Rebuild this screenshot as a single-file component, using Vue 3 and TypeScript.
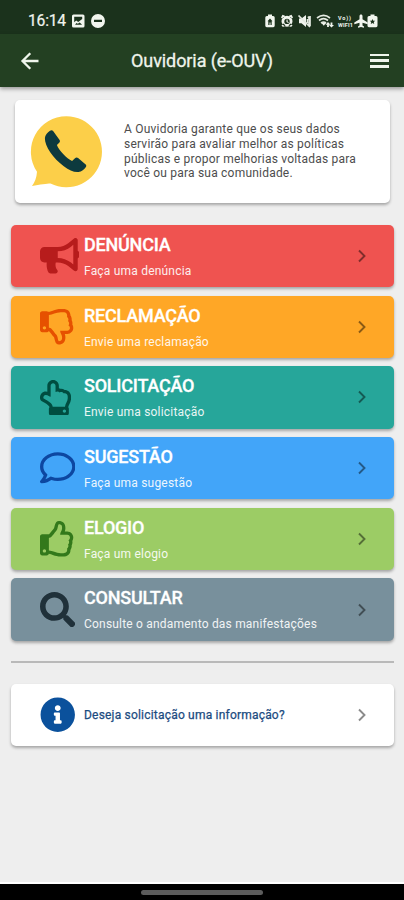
<script setup lang="ts">
interface MenuItem {
  key: string
  title: string
  subtitle: string
  width: number
  path: string
}

const items: MenuItem[] = [
  {
    key: 'denuncia',
    title: 'DENÚNCIA',
    subtitle: 'Faça uma denúncia',
    width: 576,
    path: 'M576 240c0-23.63-12.95-44.04-32-55.12V32.01C544 23.26 537.02 0 512 0c-7.12 0-14.19 2.38-19.98 7.02l-85.03 68.03C364.28 109.19 310.66 128 256 128H64c-35.35 0-64 28.65-64 64v96c0 35.35 28.65 64 64 64h33.7c-1.39 10.48-2.18 21.14-2.18 32 0 39.77 9.26 77.35 25.56 110.94 5.19 10.69 16.52 17.06 28.4 17.06h74.28c26.05 0 41.69-29.84 25.9-50.56-16.4-21.52-26.15-48.36-26.15-77.44 0-11.11 1.62-21.79 4.41-32H256c54.66 0 108.28 18.81 150.98 52.95l85.03 68.03a32.023 32.023 0 0 0 19.98 7.02c24.92 0 32-22.78 32-32V295.13C563.05 284.04 576 263.63 576 240zm-96 141.42l-33.05-26.44C392.95 311.78 325.12 288 256 288v-96c69.12 0 136.95-23.78 190.95-66.98L480 98.58v282.84z',
  },
  {
    key: 'reclamacao',
    title: 'RECLAMAÇÃO',
    subtitle: 'Envie uma reclamação',
    width: 512,
    path: 'M466.27 225.31c4.674-22.647.864-44.538-8.99-62.99 2.958-23.868-4.021-48.565-17.34-66.99C438.986 39.423 404.117 0 327 0c-7 0-15 .01-22.22.01C201.195.01 168.997 40 128 40h-10.845c-5.64-4.975-13.042-8-21.155-8H32C14.327 32 0 46.327 0 64v240c0 17.673 14.327 32 32 32h64c11.842 0 22.175-6.438 27.708-16h7.052c19.146 16.953 46.013 60.653 68.76 83.4 13.667 13.667 10.153 108.6 71.76 108.6 57.58 0 95.27-31.936 95.27-104.73 0-18.41-3.93-33.73-8.85-46.54h36.48c48.602 0 85.82-41.565 85.82-85.58 0-19.15-4.96-34.99-13.73-49.84zM64 296c-13.255 0-24-10.745-24-24s10.745-24 24-24 24 10.745 24 24-10.745 24-24 24zm330.18 16.73H290.19c0 37.82 28.36 55.37 28.36 94.54 0 23.75 0 56.73-47.28 56.73-18.91-18.91-9.46-66.18-37.82-94.54C206.9 342.89 167.28 272 138.92 272H128V85.83c53.611 0 100.001-37.82 171.64-37.82h37.82c35.512 0 60.82 17.12 53.12 65.9 15.2 8.16 26.5 36.44 13.94 57.57 21.581 20.384 18.699 51.065 5.21 65.62 9.45 0 22.36 18.91 22.27 37.81-.09 18.91-16.71 37.82-37.82 37.82z',
  },
  {
    key: 'solicitacao',
    title: 'SOLICITAÇÃO',
    subtitle: 'Envie uma solicitação',
    width: 448,
    path: 'M105.6 83.2v86.177a115.52 115.52 0 0 0-22.4-2.176c-47.914 0-83.2 35.072-83.2 92 0 45.314 48.537 57.002 78.784 75.707 12.413 7.735 23.317 16.994 33.253 25.851l.146.13.148.129C129.807 376.338 136 384.236 136 391.2v2.679c-4.952 5.747-8 13.536-8 22.12v64c0 17.673 12.894 32 28.8 32h230.4c15.906 0 28.8-14.327 28.8-32v-64c0-8.584-3.048-16.373-8-22.12V391.2c0-28.688 40-67.137 40-127.2v-21.299c0-62.542-38.658-98.8-91.145-99.94-17.813-12.482-40.785-18.491-62.791-15.985A93.148 93.148 0 0 0 272 118.847V83.2C272 37.765 234.416 0 188.8 0c-45.099 0-83.2 38.101-83.2 83.2zm118.4 0v91.026c14.669-12.837 42.825-14.415 61.05 4.95 19.646-11.227 45.624-1.687 53.625 12.925 39.128-6.524 61.325 10.076 61.325 50.6V264c0 45.491-35.913 77.21-39.676 120H183.571c-2.964-25.239-21.222-42.966-39.596-59.075-12.65-11.008-25.3-22.016-39.725-31.027C78.394 277.758 48 267.8 48 259.2c0-23.375 8.8-44 35.2-44 35.2 0 53.475 26.4 70.4 26.4V83.2c0-18.4 16.975-35.2 35.2-35.2 18.225 0 35.2 16.794 35.2 35.2zM352 424c13.255 0 24 10.745 24 24s-10.745 24-24 24-24-10.745-24-24 10.745-24 24-24z',
  },
  {
    key: 'sugestao',
    title: 'SUGESTÃO',
    subtitle: 'Faça uma sugestão',
    width: 512,
    path: 'M256 32C114.6 32 0 125.1 0 240c0 47.6 19.9 91.2 52.9 126.3C38 405.7 7 439.1 6.5 439.5c-6.6 7-8.4 17.2-4.6 26S14.4 480 24 480c61.5 0 110-25.7 139.1-46.3C192 442.8 223.2 448 256 448c141.4 0 256-93.1 256-208S397.4 32 256 32zm0 368c-26.7 0-53.1-4.1-78.4-12.1l-22.7-7.2-19.5 13.8c-14.3 10.1-33.9 21.4-57.5 29 7.3-12.1 14.4-25.7 19.9-40.2l10.6-28.1-20.6-21.8C69.7 314.1 48 282.2 48 240c0-88.2 93.3-160 208-160s208 71.8 208 160-93.3 160-208 160z',
  },
  {
    key: 'elogio',
    title: 'ELOGIO',
    subtitle: 'Faça um elogio',
    width: 512,
    path: 'M466.27 286.69C475.04 271.84 480 256 480 236.85c0-44.015-37.218-85.58-85.82-85.58H357.7c4.92-12.81 8.85-28.13 8.85-46.54C366.55 31.936 328.86 0 271.28 0c-61.607 0-58.093 94.933-71.76 108.6-22.747 22.747-49.615 66.447-68.76 83.4H32c-17.673 0-32 14.327-32 32v240c0 17.673 14.327 32 32 32h64c14.893 0 27.408-10.174 30.978-23.95 44.509 1.001 75.06 39.94 177.802 39.94 7.22 0 15.22.01 22.22.01 77.117 0 111.986-39.423 112.94-95.33 13.319-18.425 20.299-43.122 17.34-66.99 9.854-18.452 13.664-40.343 8.99-62.99zm-61.75 53.83c12.56 21.13 1.26 49.41-13.94 57.57 7.7 48.78-17.608 65.9-53.12 65.9h-37.82c-71.639 0-118.029-37.82-171.64-37.82V240h10.92c28.36 0 67.98-70.89 94.54-97.46 28.36-28.36 18.91-75.63 37.82-94.54 47.28 0 47.28 32.98 47.28 56.73 0 39.17-28.36 56.72-28.36 94.54h103.99c21.11 0 37.73 18.91 37.82 37.82.09 18.9-12.82 37.81-22.27 37.81 13.489 14.555 16.371 45.236-5.21 65.62zM88 432c0 13.255-10.745 24-24 24s-24-10.745-24-24 10.745-24 24-24 24 10.745 24 24z',
  },
  {
    key: 'consultar',
    title: 'CONSULTAR',
    subtitle: 'Consulte o andamento das manifestações',
    width: 512,
    path: 'M505 442.7L405.3 343c-4.5-4.5-10.6-7-17-7H372c27.6-35.3 44-79.7 44-128C416 93.1 322.9 0 208 0S0 93.1 0 208s93.1 208 208 208c48.3 0 92.7-16.4 128-44v16.3c0 6.4 2.5 12.5 7 17l99.7 99.7c9.4 9.4 24.6 9.4 33.9 0l28.3-28.3c9.4-9.4 9.4-24.6.1-34zM208 336c-70.7 0-128-57.2-128-128 0-70.7 57.2-128 128-128 70.7 0 128 57.2 128 128 0 70.7-57.2 128-128 128z',
  },
]
</script>

<template>
  <div class="screen">
    <div class="status">
      <span class="time">16:14</span>
      <svg class="status-left" width="34" height="16" viewBox="0 0 34 16">
        <path fill-rule="evenodd" d="M2.500 1.500h9.500A1.500 1.500 0 0 1 13.500 3v10a1.500 1.500 0 0 1-1.500 1.500H2.500A1.500 1.500 0 0 1 1 13V3a1.500 1.500 0 0 1 1.500-1.500zm.7 2.300v5.400l2-1.600 2 1.500 4-3.200V3.800zm.9 8h7l-2.400-2.300-1.800 1.200-1.500-.8z" />
        <path fill-rule="evenodd" d="M27 1a7 7 0 1 1 0 14 7 7 0 0 1 0-14zm-4 5.800v2.300h8V6.800z" />
      </svg>
      <svg class="status-right" width="116" height="16" viewBox="0 0 116 16">
        <path fill-rule="evenodd" d="M4 1.500h4V3h1.200a1.500 1.500 0 0 1 1.500 1.500v8.300a1.400 1.400 0 0 1-1.400 1.400H2.700a1.400 1.400 0 0 1-1.400-1.400V4.500A1.500 1.500 0 0 1 2.800 3H4zm2 4-2.500 2.800h.8V12h1.200V9.500h1V12h1.200V8.300h.8z" />
        <path fill-rule="evenodd" d="M18.500 1.800l2.500 1-2.500 3L17 4.500zM27.500 1.800l-2.500 1 2.500 3L29 4.500zM23 2.700a5.500 5.500 0 1 1 0 11 5.500 5.500 0 0 1 0-11zm0 3a2.700 2.700 0 1 0 0 5.400 2.700 2.700 0 0 0 0-5.400zM17.500 12.500l2-2 2 2-2.500 1.500zm11 0-2-2-2 2 2.500 1.500z" />
        <path d="M22.500 6.500h1.100v2l1.200.7-.5.9-1.800-1z" />
        <path d="M35 5.500h2.500L42 2v12l-4.500-3.800H35z" />
        <path class="line" d="M34.500 2.500 46 14M44 3.500c2 2.400 2 6.500 0 9M43.500 6v4M46 3v10" />
        <path class="line" d="M53 5c4.200-3.200 9-3.200 13 0M55 7.500c2.800-2.200 6.200-2.200 9 0M57 10c1.600-1.100 3.500-1.100 5 0" />
        <path d="m57.500 10 2.300 2.800L62 10zM64 9l2.500 2.800h-1.600V14h-1.800v-2.200h-1.600zM67.500 14.500 65 12h1.600V9.500h1.800V12H70z" />
        <text x="74" y="7.200" class="volte" textLength="13">Vo))</text>
        <text x="74" y="13.700" class="volte" textLength="15">WIFI1</text>
        <path d="M97 1.500c.9 0 1.500.7 1.500 1.500v3.300l5.200 3.200v1.800l-5.200-1.500v2.600l1.500 1.200v1.100l-3-.8-3 .8v-1.100l1.500-1.200V9.800l-5.200 1.500V9.500l5.200-3.200V3c0-.8.600-1.500 1.500-1.500z" />
        <path fill-rule="evenodd" d="M106.500 1.500h4V3h1.500a1.500 1.500 0 0 1 1.500 1.500v8.300a1.400 1.400 0 0 1-1.400 1.400h-7.200a1.400 1.400 0 0 1-1.400-1.400V4.500a1.500 1.500 0 0 1 1.500-1.500h1.500zm2 4.500-.8 1.700h-2l1.500 1.400-.4 2 1.700-1 1.700 1-.4-2 1.500-1.400h-2z" />
      </svg>
    </div>

    <header class="appbar">
      <svg class="back" width="24" height="24" viewBox="0 0 24 24"><path d="M20.500 12H5M12.300 4.200 4.500 12l7.800 7.800" /></svg>
      <h1>Ouvidoria (e-OUV)</h1>
      <div class="burger"><i /><i /><i /></div>
    </header>

    <main>
      <section class="card intro">
        <svg width="72" height="74" viewBox="0 0 72 74">
          <path fill="#fccf49" d="M36.500 1.300a35.500 35.500 0 1 1-16 67.200c-3.500.2-10.500 1-18.500 2.500 2.800-3.800 4.600-8.300 5-14.300A35.500 35.500 0 0 1 36.500 1.300z" />
          <path fill="#0d3a3e" d="M20 15.700c-2.600 1.700-5 4.300-5.100 7.400-.3 8.200 8.300 20.500 18.900 28.100 5.300 3.800 9.800 6.200 14.600 5.800 3.300-.3 5.900-2.500 7.500-5 .7-1.100.4-2-.5-2.800l-7.300-6.100c-1-.9-2.200-.8-3.100.1l-2.900 2.900c-5.500-2.700-13.100-10.600-15.200-16.100l2.300-2.300c1-1 1-1.900.2-3l-6.300-8.700c-.8-1.100-2-1-3.100-.3z" />
        </svg>
        <p>A Ouvidoria garante que os seus dados<br>servirão para avaliar melhor as políticas<br>públicas e propor melhorias voltadas para<br>você ou para sua comunidade.</p>
      </section>

      <nav>
        <a v-for="item in items" :key="item.key" class="card row" :class="item.key">
          <span class="icon">
            <svg :viewBox="`0 0 ${item.width} 512`"><path :d="item.path" /></svg>
          </span>
          <span class="copy">
            <strong>{{ item.title }}</strong>
            <small>{{ item.subtitle }}</small>
          </span>
          <svg class="chevron" width="10" height="14" viewBox="0 0 10 14"><path d="m2 1.500 5.500 5.500L2 12.500" /></svg>
        </a>
      </nav>

      <hr>

      <a class="card row info">
        <span class="icon">
          <svg viewBox="0 0 512 512"><path d="M256 8C119.043 8 8 119.083 8 256c0 136.997 111.043 248 248 248s248-111.003 248-248C504 119.083 392.957 8 256 8zm0 110c23.196 0 42 18.804 42 42s-18.804 42-42 42-42-18.804-42-42 18.804-42 42-42zm56 254c0 6.627-5.373 12-12 12h-88c-6.627 0-12-5.373-12-12v-24c0-6.627 5.373-12 12-12h12v-64h-12c-6.627 0-12-5.373-12-12v-24c0-6.627 5.373-12 12-12h64c6.627 0 12 5.373 12 12v100h12c6.627 0 12 5.373 12 12v24z" /></svg>
        </span>
        <span class="question">Deseja solicitação uma informação?</span>
        <svg class="chevron" width="10" height="14" viewBox="0 0 10 14"><path d="m2 1.500 5.500 5.500L2 12.500" /></svg>
      </a>
    </main>

    <footer><i /></footer>
  </div>
</template>

<style>
body {
  background: #eee;
}
</style>

<style scoped>
.screen {
  display: flex;
  flex-direction: column;
  width: 404px;
  height: 900px;
  overflow: hidden;
  background: #eee;
  font-family: Roboto, "Liberation Sans", sans-serif;
}
.status {
  display: flex;
  align-items: center;
  box-sizing: border-box;
  height: 34px;
  padding: 8px 24px 0 28px;
  background: #1b321c;
  color: #f1f5ee;
  fill: #f1f5ee;
}
.time {
  width: 42.500px;
  font-size: 15.700px;
  letter-spacing: -.25px;
  line-height: 20px;
  -webkit-text-stroke: .2px #f1f5ee;
}
.status-right {
  margin-left: auto;
}
.line {
  fill: none;
  stroke: #e4eae1;
  stroke-width: 1.700;
}
.volte {
  font-size: 5.500px;
  font-weight: 700;
}
.appbar {
  display: flex;
  align-items: center;
  box-sizing: border-box;
  height: 52.500px;
  flex: none;
  padding: 1px 15px 0 18px;
  background: #234022;
  box-shadow: 0 2px 4px rgba(0, 0, 0, .35);
  z-index: 1;
}
.back {
  fill: none;
  stroke: #eff5ec;
  stroke-width: 2.300;
}
h1 {
  margin: 0 auto 0 89px;
  color: #eff5ec;
  font-size: 18px;
  font-weight: 400;
  letter-spacing: -.08px;
  line-height: 24px;
  -webkit-text-stroke: .3px #eff5ec;
}
.burger {
  display: flex;
  flex-direction: column;
  gap: 3px;
  width: 19px;
}
.burger i {
  height: 2.800px;
  background: #eff5ec;
}
main {
  flex: 1;
  padding: 13.500px 10px 0 11px;
}
.card {
  border-radius: 5px;
  box-shadow: 0 2px 3px rgba(0, 0, 0, .3);
}
.intro {
  display: flex;
  align-items: center;
  gap: 22px;
  box-sizing: border-box;
  height: 103px;
  margin: 0 4px;
  padding: 0 15px;
  background: #fff;
}
.intro p {
  margin: 0;
  color: #4d4d4d;
  font-size: 12px;
  letter-spacing: .21px;
  line-height: 14.700px;
  white-space: nowrap;
}
nav {
  display: grid;
  gap: 8.500px;
  margin-top: 22px;
}
.row {
  display: flex;
  align-items: center;
  box-sizing: border-box;
  height: 62.200px;
  padding: 0 27.500px 0 28.500px;
}
.icon {
  width: 44.500px;
  height: 35.500px;
}
.icon svg {
  display: block;
  height: 35.500px;
}
.copy {
  display: flex;
  flex-direction: column;
  gap: 5px;
  padding-top: .5px;
  color: #fff;
}
.copy strong {
  font-size: 18px;
  font-weight: 500;
  letter-spacing: -.22px;
  line-height: 24px;
  -webkit-text-stroke: .3px #fff;
}
.copy small {
  font-size: 12px;
  letter-spacing: .2px;
  line-height: 18px;
  opacity: .9;
}
.chevron {
  margin-left: auto;
  fill: none;
  stroke: rgba(0, 0, 0, .46);
  stroke-width: 1.900;
}
.denuncia {
  background: #ef5350;
  fill: #b71c1c;
}
.reclamacao {
  background: #ffa726;
  fill: #e65100;
}
.solicitacao {
  background: #26a69a;
  fill: #004d40;
}
.sugestao {
  background: #42a5f9;
  fill: #0d47a1;
}
.elogio {
  background: #9ccc65;
  fill: #33791b;
}
.consultar {
  background: #78909c;
  fill: #20313a;
}
hr {
  height: 2.500px;
  margin: 20.300px 0 20.700px;
  border: 0;
  background: #b9b9b9;
}
.info {
  background: #fff;
  fill: #0b519c;
}
.question {
  color: #1b4b80;
  font-size: 12px;
  letter-spacing: .2px;
  -webkit-text-stroke: .25px #1b4b80;
}
footer {
  display: flex;
  align-items: center;
  justify-content: center;
  box-sizing: border-box;
  height: 18px;
  border-top: 2px solid #fff;
  background: #000;
}
footer i {
  width: 122px;
  height: 5px;
  border-radius: 3px;
  background: #5c5c5c;
}
</style>
